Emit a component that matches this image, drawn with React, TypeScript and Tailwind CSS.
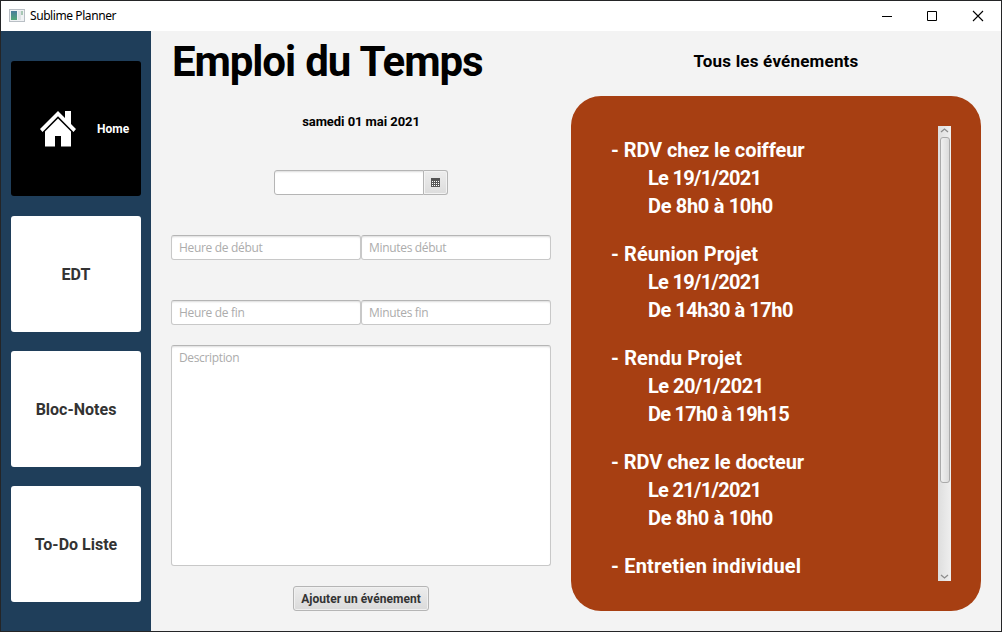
import React from "react";

const display = "font-['Roboto',sans-serif] font-bold whitespace-pre";
const field =
  "h-[25px] w-[190px] rounded-[3px] border border-[#c8c8c8] border-t-[#b5b5b5] bg-white px-[7px] font-['Open_Sans',sans-serif] text-[12px] tracking-[-0.32px] leading-[23px] text-[#a8a8a8] placeholder-[#acacac] shadow-[inset_0_2px_2px_-1px_rgba(0,0,0,0.14)] outline-none";
const navButton = "w-[130px] h-[116px] rounded-[3px] bg-white pt-[2px] text-[16px] text-[#333]";

type Line = { text: string; cls: string };
const events: { title: Line; lines: Line[] }[] = [
  {
    title: { text: "- RDV chez le coiffeur", cls: "tracking-[-0.09px]" },
    lines: [
      { text: "Le 19/1/2021", cls: "tracking-[-0.7px]" },
      { text: "De 8h0 à 10h0", cls: "tracking-[-0.32px]" },
    ],
  },
  {
    title: { text: "- Réunion Projet", cls: "tracking-[0.1px]" },
    lines: [
      { text: "Le 19/1/2021", cls: "tracking-[-0.7px]" },
      { text: "De 14h30 à 17h0", cls: "tracking-[-0.48px]" },
    ],
  },
  {
    title: { text: "- Rendu Projet", cls: "tracking-[0.14px]" },
    lines: [
      { text: "Le 20/1/2021", cls: "tracking-[-0.5px]" },
      { text: "De 17h0 à 19h15", cls: "tracking-[-0.74px]" },
    ],
  },
  {
    title: { text: "- RDV chez le docteur", cls: "tracking-[-0.05px]" },
    lines: [
      { text: "Le 21/1/2021", cls: "tracking-[-0.7px]" },
      { text: "De 8h0 à 10h0", cls: "tracking-[-0.32px]" },
    ],
  },
  { title: { text: "- Entretien individuel", cls: "tracking-[0.19px]" }, lines: [] },
];

function TitleBar() {
  return (
    <header className="flex h-[30px] shrink-0 items-center bg-white">
      <svg className="ml-2 shrink-0" width="16" height="14" viewBox="0 0 16 14">
        <defs>
          <linearGradient id="appPane" x1="0" y1="0" x2="0" y2="1">
            <stop offset="0" stopColor="#4a7c9c" />
            <stop offset="1" stopColor="#55a878" />
          </linearGradient>
        </defs>
        <rect x="0.5" y="0.5" width="15" height="12" fill="#f0f2f4" stroke="#b9bfc5" />
        <rect x="2" y="2" width="6" height="9" fill="url(#appPane)" />
        <rect x="9" y="2" width="3" height="9" fill="#dfe3e6" />
        <rect x="12" y="2" width="2" height="4" fill="#a8c8b5" />
      </svg>
      <span className="ml-[5px] font-['Noto_Sans',sans-serif] text-[12px] leading-4 tracking-[-0.42px] text-black">Sublime Planner</span>
      <svg className="ml-auto mr-[16px]" width="104" height="12" viewBox="0 0 104 12" fill="none" stroke="#000">
        <path d="M1 6.5H11M46.500 1.500h9v9h-9z" />
        <path d="M92 1l10 10M102 1L92 11" strokeWidth="1.100" />
      </svg>
    </header>
  );
}

function Sidebar() {
  return (
    <nav className="flex w-[150px] shrink-0 flex-col items-center bg-[#1f3e5a] pt-[30px]">
      <button className="flex h-[135px] w-[130px] items-center rounded-[3px] bg-black pl-[29px]">
        <svg width="36" height="36" viewBox="0 0 36 36" fill="#fff">
          <path d="M18 0L0 18l2.500 3L18 5.200 33.500 21l2.500-3-5-5V0h-6v7z" />
          <path d="M18 7.500L5 20.500V35.500h10V25h6v10.500h10V20.500z" />
        </svg>
        <span className={`${display} ml-[21px] text-[12px] text-white`}>Home</span>
      </button>
      <button className={`${display} ${navButton} mt-5`}>EDT</button>
      <button className={`${display} ${navButton} mt-[19px]`}>Bloc-Notes</button>
      <button className={`${display} ${navButton} mt-[19px]`}>To-Do Liste</button>
    </nav>
  );
}

function Planner() {
  return (
    <section className="ml-5 flex w-[380px] shrink-0 flex-col items-center">
      <h1 className={`${display} ml-px h-[60px] self-start text-[42px] leading-[61px] tracking-[-1.1px] [word-spacing:1px] text-black`}>Emploi du Temps</h1>
      <p className={`${display} mt-[21px] h-5 text-[13px] leading-5 tracking-[-0.06px] text-black`}>samedi 01 mai 2021</p>
      <div className="mt-[38px] flex h-[25px] w-[174px]">
        <input className="w-[150px] rounded-l-[3px] border border-[#b5b5b5] bg-white shadow-[inset_0_2px_2px_-1px_rgba(0,0,0,0.14)] outline-none" />
        <button className="flex w-6 items-center justify-center rounded-r-[3px] border border-l-0 border-[#b5b5b5] bg-linear-to-b from-[#ededed] to-[#dcdcdc] shadow-[inset_0_0_0_1px_#f3f3f3]">
          <svg width="9" height="9" viewBox="0 0 9 9">
            <path fill="#555" d="M0 0h9v9H0z" />
            <path fill="#fff" d="M1 3h1v1H1zM3 3h1v1H3zM5 3h1v1H5zM7 3h1v1H7zM1 5h1v1H1zM3 5h1v1H3zM5 5h1v1H5zM7 5h1v1H7zM1 7h1v1H1zM3 7h1v1H3zM5 7h1v1H5zM7 7h1v1H7z" />
          </svg>
        </button>
      </div>
      <div className="mt-10 flex">
        <input className={field} placeholder="Heure de début" />
        <input className={field} placeholder="Minutes début" />
      </div>
      <div className="mt-10 flex">
        <input className={field} placeholder="Heure de fin" />
        <input className={field} placeholder="Minutes fin" />
      </div>
      <textarea
        className="mt-5 h-[221px] w-[380px] resize-none rounded-[3px] border border-[#c8c8c8] border-t-[#b5b5b5] bg-white px-[7px] py-[3px] font-['Open_Sans',sans-serif] text-[12px] leading-[18px] tracking-[-0.35px] placeholder-[#acacac] shadow-[inset_0_2px_2px_-1px_rgba(0,0,0,0.14)] outline-none"
        placeholder="Description"
      />
      <button className={`${display} mt-5 h-[25px] w-[136px] rounded-[3px] border border-[#b5b5b5] bg-linear-to-b from-[#ededed] to-[#dadada] text-[12px] text-[#333] tracking-[0.04px] shadow-[inset_0_0_0_1px_#f0f0f0]`}>Ajouter un événement</button>
    </section>
  );
}

function Scrollbar() {
  return (
    <div className="flex h-[455px] w-[13px] shrink-0 flex-col items-center bg-linear-to-r from-[#dedede] to-[#efefef]">
      <svg className="mt-[1px] shrink-0" width="9" height="7" viewBox="0 0 9 7" fill="none" stroke="#8c8c8c" strokeWidth="1.300"><path d="M1 5l3.500-3L8 5" /></svg>
      <div className="mt-[3px] ml-[1px] h-[346px] w-[10px] rounded-[3px] border border-[#aaa] bg-linear-to-r from-[#f0f0f0] to-[#dcdcdc]" />
      <svg className="mt-auto mb-[1px] shrink-0" width="9" height="7" viewBox="0 0 9 7" fill="none" stroke="#8c8c8c" strokeWidth="1.300"><path d="M1 2l3.500 3L8 2" /></svg>
    </div>
  );
}

function EventsPanel() {
  return (
    <section className="ml-5 flex w-[410px] shrink-0 flex-col items-center">
      <h2 className={`${display} h-[65px] text-[17px] leading-[60px] tracking-[0.2px] text-black`}>Tous les événements</h2>
      <div className="flex h-[515px] w-[410px] rounded-[30px] bg-[#a73f12] pt-[30px] pr-[30px] pl-10">
        <ul className="h-[455px] flex-1 overflow-hidden pt-[10px] text-[20px] leading-7 text-white">
          {events.map((e) => (
            <li key={e.title.text} className="mb-5">
              <p className={`${display} ${e.title.cls}`}>{e.title.text}</p>
              {e.lines.map((l) => (
                <p key={l.text} className={`${display} pl-[37px] ${l.cls}`}>{l.text}</p>
              ))}
            </li>
          ))}
        </ul>
        <Scrollbar />
      </div>
    </section>
  );
}

export default function App() {
  return (
    <div className="flex h-[632px] w-[1002px] flex-col overflow-hidden border border-[#242527] bg-[#f3f3f3]">
      <TitleBar />
      <main className="flex flex-1">
        <Sidebar />
        <Planner />
        <EventsPanel />
      </main>
    </div>
  );
}
